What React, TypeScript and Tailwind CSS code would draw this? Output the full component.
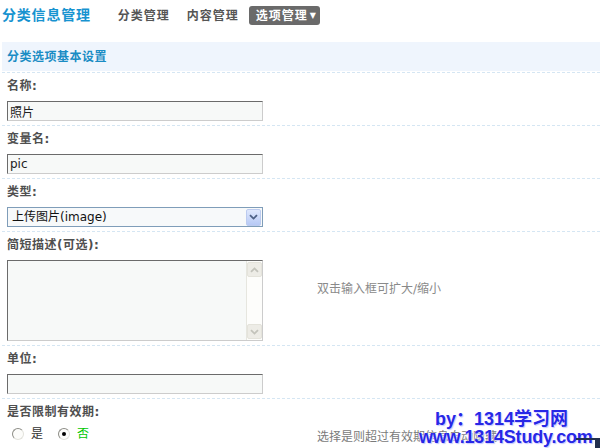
import React from 'react';

// 分类信息管理 - 选项设置页面
const font = "font-['DejaVu_Sans','Noto_Sans_CJK_SC',sans-serif]";
const labelCls = 'h-[18px] text-[12px] leading-[18px] font-bold tracking-[0.5px] text-[#4f4f4f]';
const inputCls =
    'mt-[6px] block h-[20px] w-[256px] border border-[#cccccc] border-t-[#6b6b6b] border-l-[#6b6b6b] bg-[#f7f9f8] pl-[2px] text-[12px] leading-[18px] text-[#222] outline-none';
const rowCls = 'flex border-t border-dashed border-[#d5e6f3] pl-[5px] pt-[4px] pb-[4px]';

function Chevron({ up, color }: { up?: boolean; color: string }) {
    return (
        <svg width="9" height="6" viewBox="0 0 9 6" className={up ? 'rotate-180' : ''}>
            <path d="M1 1.2 L4.5 4.6 L8 1.2" fill="none" stroke={color} strokeWidth="1.8" />
        </svg>
    );
}

function Radio({ checked }: { checked?: boolean }) {
    return (
        <span className="flex h-[12px] w-[12px] items-center justify-center rounded-full border border-[#e2e2dc] border-t-[#8d8d86] border-l-[#8d8d86] bg-[#fcfcfa]">
            {checked && <span className="h-[4px] w-[4px] rounded-full bg-black" />}
        </span>
    );
}

export default function App() {
    return (
        <div className={`relative h-[448px] w-[600px] overflow-hidden bg-white ${font}`}>
            {/* 顶部导航 */}
            <div className="flex h-[31px] items-center pl-[2px]">
                <span className="text-[14px] font-bold tracking-[0.8px] text-[#1793d0]">分类信息管理</span>
                <div className="ml-[20px] flex items-center gap-[3px] text-[12px] font-bold tracking-[1px] text-[#555]">
                    <span className="px-[7px]">分类管理</span>
                    <span className="px-[7px]">内容管理</span>
                    <span className="flex h-[19px] items-center rounded-[3px] bg-[#6a6a6a] pl-[7px] pr-[4px] text-white">
                        选项管理
                        <span className="ml-[2px] text-[8px] tracking-normal">▼</span>
                    </span>
                </div>
            </div>

            <div className="ml-[2px] mt-[11px]">
                {/* 标题栏 */}
                <div className="flex h-[29px] items-center bg-[#eff5fd] pl-[5px] text-[12px] font-bold tracking-[0.5px] text-[#1a8cc4]">
                    分类选项基本设置
                </div>
                <div className="h-[1px]" />

                <div className={rowCls}>
                    <div className="w-[256px]">
                        <div className={labelCls}>名称:</div>
                        <input readOnly defaultValue="照片" className={inputCls} />
                    </div>
                </div>

                <div className={rowCls}>
                    <div className="w-[256px]">
                        <div className={labelCls}>变量名:</div>
                        <input readOnly defaultValue="pic" className={inputCls} />
                    </div>
                </div>

                <div className={rowCls}>
                    <div className="w-[256px]">
                        <div className={labelCls}>类型:</div>
                        <div className="mt-[6px] flex h-[20px] w-[256px] items-center justify-between border border-[#7f9db9] bg-[#f7f9fa] pl-[4px] pr-[1px] text-[12px] text-[#111]">
                            <span>上传图片(image)</span>
                            <span className="flex h-[17px] w-[15px] items-center justify-center rounded-[2px] border border-[#bccbef] bg-gradient-to-b from-[#dfe8fd] to-[#b7c9f5]">
                                <Chevron color="#4d6185" />
                            </span>
                        </div>
                    </div>
                </div>

                <div className={`${rowCls} items-center`}>
                    <div className="w-[256px]">
                        <div className={labelCls}>简短描述(可选):</div>
                        <div className="mt-[6px] flex h-[81px] w-[256px] border border-[#cccccc] border-t-[#6b6b6b] border-l-[#6b6b6b] bg-[#f7f9f8]">
                            <div className="flex-1" />
                            <div className="flex w-[16px] flex-col justify-between border-l border-[#e6e6df] bg-[#fdfdfb] py-[1px]">
                                <span className="flex h-[15px] w-[15px] items-center justify-center rounded-[2px] border border-[#e4e3db] bg-[#edece6]">
                                    <Chevron up color="#c3c3bb" />
                                </span>
                                <span className="flex h-[15px] w-[15px] items-center justify-center rounded-[2px] border border-[#e4e3db] bg-[#edece6]">
                                    <Chevron color="#c3c3bb" />
                                </span>
                            </div>
                        </div>
                    </div>
                    <span className="ml-[54px] text-[12px] text-[#8a8a8a]">双击输入框可扩大/缩小</span>
                </div>

                <div className={rowCls}>
                    <div className="w-[256px]">
                        <div className={labelCls}>单位:</div>
                        <input readOnly defaultValue="" className={inputCls} />
                    </div>
                </div>

                <div className={rowCls}>
                    <div className="w-[256px]">
                        <div className={labelCls}>是否限制有效期:</div>
                        <div className="ml-[5px] mt-[4px] flex h-[18px] items-center text-[12px]">
                            <Radio />
                            <span className="ml-[7px] text-[#333]">是</span>
                            <span className="ml-[15px]" />
                            <Radio checked />
                            <span className="ml-[7px] text-[#00c800]">否</span>
                        </div>
                    </div>
                    <span className="ml-[54px] mt-[25px] text-[12px] leading-[18px] text-[#7a7a7a]">
                        选择是则超过有效期信息自动隐藏
                    </span>
                </div>
            </div>

            {/* 水印 */}
            <div className="absolute left-[419px] top-[410px] font-['Liberation_Sans','Noto_Sans_CJK_SC',sans-serif] text-[18px] font-bold leading-[18px] text-[#2727e6] [text-shadow:0_0_2px_#ffffff,1px_1px_1px_#b9b9ff]">
                <div className="pl-[16px]">by：1314学习网</div>
                <div className="tracking-[-0.2px]">www.1314Study.com</div>
            </div>
            <div className="absolute left-[576px] top-[438px] h-[2px] w-[24px] bg-[#22304d]" />
            <div className="absolute left-[595px] top-[440px] h-[8px] w-[5px] bg-[#22304d]" />
        </div>
    );
}
